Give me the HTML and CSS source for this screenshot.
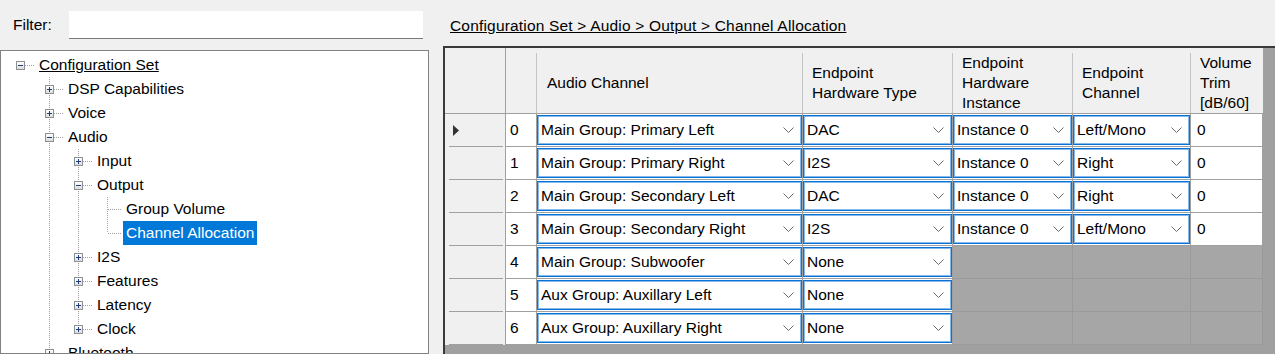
FILE: index.html
```html
<!DOCTYPE html>
<html lang="en">
<head>
<meta charset="utf-8">
<title>Channel Allocation</title>
<link rel="stylesheet" href="styles.css">
</head>
<body>
<div class="left">
  <div class="filter">
    <span class="filter-label">Filter:</span>
    <div class="filter-input"></div>
  </div>
  <div class="tree">
    <div class="row"><span class="node root"><i class="box"></i></span><span class="lbl u">Configuration Set</span></div>
    <div class="row"><span class="g"></span><span class="node mid"><i class="box plus"></i></span><span class="lbl">DSP Capabilities</span></div>
    <div class="row"><span class="g"></span><span class="node mid"><i class="box plus"></i></span><span class="lbl">Voice</span></div>
    <div class="row"><span class="g"></span><span class="node mid"><i class="box"></i></span><span class="lbl">Audio</span></div>
    <div class="row"><span class="g"></span><span class="g v"></span><span class="node mid"><i class="box plus"></i></span><span class="lbl">Input</span></div>
    <div class="row"><span class="g"></span><span class="g v"></span><span class="node mid"><i class="box"></i></span><span class="lbl">Output</span></div>
    <div class="row"><span class="g"></span><span class="g v"></span><span class="g v"></span><span class="node mid"></span><span class="lbl">Group Volume</span></div>
    <div class="row"><span class="g"></span><span class="g v"></span><span class="g v"></span><span class="node last"></span><span class="lbl sel">Channel Allocation</span></div>
    <div class="row"><span class="g"></span><span class="g v"></span><span class="node mid"><i class="box plus"></i></span><span class="lbl">I2S</span></div>
    <div class="row"><span class="g"></span><span class="g v"></span><span class="node mid"><i class="box plus"></i></span><span class="lbl">Features</span></div>
    <div class="row"><span class="g"></span><span class="g v"></span><span class="node mid"><i class="box plus"></i></span><span class="lbl">Latency</span></div>
    <div class="row"><span class="g"></span><span class="g v"></span><span class="node last"><i class="box plus"></i></span><span class="lbl">Clock</span></div>
    <div class="row"><span class="g"></span><span class="node mid"><i class="box plus"></i></span><span class="lbl">Bluetooth</span></div>
  </div>
</div>

<div class="right">
  <div class="crumb"><span>Configuration Set &gt; Audio &gt; Output &gt; Channel Allocation</span></div>
  <div class="dgv">
    <div class="tbl">
      <div class="hc corner"></div>
      <div class="hc"></div>
      <div class="hc pad10">Audio Channel</div>
      <div class="hc">Endpoint<br>Hardware Type</div>
      <div class="hc">Endpoint<br>Hardware<br>Instance</div>
      <div class="hc">Endpoint<br>Channel</div>
      <div class="hc noline">Volume<br>Trim<br>[dB/60]</div>

      <!-- row 0 -->
      <div class="rh"><svg class="arrow" width="6" height="11" viewBox="0 0 6 11"><polygon points="0,0 6,5.5 0,11" fill="#333"/></svg></div>
      <div class="c idx">0</div>
      <div class="c"><div class="cb"><span>Main Group: Primary Left</span><svg width="11" height="6" viewBox="0 0 11 6"><path d="M.5 .5 5.5 5.5 10.5 .5" fill="none" stroke="#6a6a6a"/></svg></div></div>
      <div class="c"><div class="cb"><span>DAC</span><svg width="11" height="6" viewBox="0 0 11 6"><path d="M.5 .5 5.5 5.5 10.5 .5" fill="none" stroke="#6a6a6a"/></svg></div></div>
      <div class="c"><div class="cb"><span>Instance 0</span><svg width="11" height="6" viewBox="0 0 11 6"><path d="M.5 .5 5.5 5.5 10.5 .5" fill="none" stroke="#6a6a6a"/></svg></div></div>
      <div class="c"><div class="cb"><span>Left/Mono</span><svg width="11" height="6" viewBox="0 0 11 6"><path d="M.5 .5 5.5 5.5 10.5 .5" fill="none" stroke="#6a6a6a"/></svg></div></div>
      <div class="c vol">0</div>

      <!-- row 1 -->
      <div class="rh"></div>
      <div class="c idx">1</div>
      <div class="c"><div class="cb"><span>Main Group: Primary Right</span><svg width="11" height="6" viewBox="0 0 11 6"><path d="M.5 .5 5.5 5.5 10.5 .5" fill="none" stroke="#6a6a6a"/></svg></div></div>
      <div class="c"><div class="cb"><span>I2S</span><svg width="11" height="6" viewBox="0 0 11 6"><path d="M.5 .5 5.5 5.5 10.5 .5" fill="none" stroke="#6a6a6a"/></svg></div></div>
      <div class="c"><div class="cb"><span>Instance 0</span><svg width="11" height="6" viewBox="0 0 11 6"><path d="M.5 .5 5.5 5.5 10.5 .5" fill="none" stroke="#6a6a6a"/></svg></div></div>
      <div class="c"><div class="cb"><span>Right</span><svg width="11" height="6" viewBox="0 0 11 6"><path d="M.5 .5 5.5 5.5 10.5 .5" fill="none" stroke="#6a6a6a"/></svg></div></div>
      <div class="c vol">0</div>

      <!-- row 2 -->
      <div class="rh"></div>
      <div class="c idx">2</div>
      <div class="c"><div class="cb"><span>Main Group: Secondary Left</span><svg width="11" height="6" viewBox="0 0 11 6"><path d="M.5 .5 5.5 5.5 10.5 .5" fill="none" stroke="#6a6a6a"/></svg></div></div>
      <div class="c"><div class="cb"><span>DAC</span><svg width="11" height="6" viewBox="0 0 11 6"><path d="M.5 .5 5.5 5.5 10.5 .5" fill="none" stroke="#6a6a6a"/></svg></div></div>
      <div class="c"><div class="cb"><span>Instance 0</span><svg width="11" height="6" viewBox="0 0 11 6"><path d="M.5 .5 5.5 5.5 10.5 .5" fill="none" stroke="#6a6a6a"/></svg></div></div>
      <div class="c"><div class="cb"><span>Right</span><svg width="11" height="6" viewBox="0 0 11 6"><path d="M.5 .5 5.5 5.5 10.5 .5" fill="none" stroke="#6a6a6a"/></svg></div></div>
      <div class="c vol">0</div>

      <!-- row 3 -->
      <div class="rh"></div>
      <div class="c idx">3</div>
      <div class="c"><div class="cb"><span>Main Group: Secondary Right</span><svg width="11" height="6" viewBox="0 0 11 6"><path d="M.5 .5 5.5 5.5 10.5 .5" fill="none" stroke="#6a6a6a"/></svg></div></div>
      <div class="c"><div class="cb"><span>I2S</span><svg width="11" height="6" viewBox="0 0 11 6"><path d="M.5 .5 5.5 5.5 10.5 .5" fill="none" stroke="#6a6a6a"/></svg></div></div>
      <div class="c"><div class="cb"><span>Instance 0</span><svg width="11" height="6" viewBox="0 0 11 6"><path d="M.5 .5 5.5 5.5 10.5 .5" fill="none" stroke="#6a6a6a"/></svg></div></div>
      <div class="c"><div class="cb"><span>Left/Mono</span><svg width="11" height="6" viewBox="0 0 11 6"><path d="M.5 .5 5.5 5.5 10.5 .5" fill="none" stroke="#6a6a6a"/></svg></div></div>
      <div class="c vol">0</div>

      <!-- row 4 -->
      <div class="rh"></div>
      <div class="c idx">4</div>
      <div class="c"><div class="cb"><span>Main Group: Subwoofer</span><svg width="11" height="6" viewBox="0 0 11 6"><path d="M.5 .5 5.5 5.5 10.5 .5" fill="none" stroke="#6a6a6a"/></svg></div></div>
      <div class="c"><div class="cb"><span>None</span><svg width="11" height="6" viewBox="0 0 11 6"><path d="M.5 .5 5.5 5.5 10.5 .5" fill="none" stroke="#6a6a6a"/></svg></div></div>
      <div class="c empty"></div>
      <div class="c empty"></div>
      <div class="c empty"></div>

      <!-- row 5 -->
      <div class="rh"></div>
      <div class="c idx">5</div>
      <div class="c"><div class="cb"><span>Aux Group: Auxillary Left</span><svg width="11" height="6" viewBox="0 0 11 6"><path d="M.5 .5 5.5 5.5 10.5 .5" fill="none" stroke="#6a6a6a"/></svg></div></div>
      <div class="c"><div class="cb"><span>None</span><svg width="11" height="6" viewBox="0 0 11 6"><path d="M.5 .5 5.5 5.5 10.5 .5" fill="none" stroke="#6a6a6a"/></svg></div></div>
      <div class="c empty"></div>
      <div class="c empty"></div>
      <div class="c empty"></div>

      <!-- row 6 -->
      <div class="rh"></div>
      <div class="c idx">6</div>
      <div class="c"><div class="cb"><span>Aux Group: Auxillary Right</span><svg width="11" height="6" viewBox="0 0 11 6"><path d="M.5 .5 5.5 5.5 10.5 .5" fill="none" stroke="#6a6a6a"/></svg></div></div>
      <div class="c"><div class="cb"><span>None</span><svg width="11" height="6" viewBox="0 0 11 6"><path d="M.5 .5 5.5 5.5 10.5 .5" fill="none" stroke="#6a6a6a"/></svg></div></div>
      <div class="c empty"></div>
      <div class="c empty"></div>
      <div class="c empty"></div>
    </div>
  </div>
</div>
</body>
</html>
```

FILE: styles.css
```css
* { box-sizing: border-box; }

html, body { margin: 0; padding: 0; }

body {
  width: 1275px;
  height: 354px;
  overflow: hidden;
  background: #f0f0f0;
  font-family: "Liberation Sans", Arial, sans-serif;
  font-size: 15.5px;
  color: #000;
  display: flex;
}

/* ---------- left pane ---------- */
.left {
  width: 429px;
  flex: none;
  display: flex;
  flex-direction: column;
}

.filter {
  height: 50px;
  flex: none;
  display: flex;
  align-items: flex-start;
  padding: 11px 0 0 13px;
}

.filter-label {
  width: 56px;
  line-height: 28px;
}

.filter-input {
  width: 354px;
  height: 28px;
  background: #fff;
  border-bottom: 1px solid #7a7a7a;
}

.tree {
  flex: 1;
  min-height: 0;
  background: #fff;
  border: 1px solid #828282;
  padding: 2px 0 0 5px;
  overflow: hidden;
}

.row {
  display: flex;
  height: 24px;
  flex: none;
}

.g, .node {
  width: 29px;
  flex: none;
}

.g.v {
  background: repeating-linear-gradient(to bottom, #a0a0a0 0 1px, transparent 1px 2px) 14px 0 / 1px 100% no-repeat;
}

.node {
  display: flex;
  align-items: center;
  justify-content: center;
}

.node.root {
  background: repeating-linear-gradient(to right, #a0a0a0 0 1px, transparent 1px 2px) 15px 12px / 14px 1px no-repeat;
}

.node.mid {
  background:
    repeating-linear-gradient(to right, #a0a0a0 0 1px, transparent 1px 2px) 15px 12px / 14px 1px no-repeat,
    repeating-linear-gradient(to bottom, #a0a0a0 0 1px, transparent 1px 2px) 14px 0 / 1px 100% no-repeat;
}

.node.last {
  background:
    repeating-linear-gradient(to right, #a0a0a0 0 1px, transparent 1px 2px) 15px 12px / 14px 1px no-repeat,
    repeating-linear-gradient(to bottom, #a0a0a0 0 1px, transparent 1px 2px) 14px 0 / 1px 12px no-repeat;
}

.box {
  display: block;
  width: 9px;
  height: 9px;
  border: 1px solid #8e8f8f;
  background:
    linear-gradient(#1f3d78, #1f3d78) center / 5px 1px no-repeat,
    linear-gradient(#ffffff, #dcdcdc);
}

.box.plus {
  background:
    linear-gradient(#1f3d78, #1f3d78) center / 5px 1px no-repeat,
    linear-gradient(#1f3d78, #1f3d78) center / 1px 5px no-repeat,
    linear-gradient(#ffffff, #dcdcdc);
}

.lbl {
  margin-left: 1px;
  padding: 0 3px;
  line-height: 24px;
  white-space: nowrap;
}

.lbl.u { text-decoration: underline; }

.lbl.sel {
  background: #0078d7;
  color: #fff;
}

/* ---------- right pane ---------- */
.right {
  flex: 1;
  min-width: 0;
  margin-left: 14px;
  display: flex;
  flex-direction: column;
}

.crumb {
  height: 46px;
  flex: none;
  padding: 17px 0 0 7px;
  line-height: 18px;
  letter-spacing: 0.18px;
  white-space: nowrap;
}

.crumb span { text-decoration: underline; }

.dgv {
  flex: 1;
  min-height: 0;
  background: #a0a0a0;
  border-top: 2px solid #3a3a3a;
  border-left: 2px solid #3a3a3a;
  overflow: hidden;
}

.tbl {
  display: grid;
  width: 818px;
  grid-template-columns: 61px 31px 266px 150px 120px 118px 72px;
  grid-template-rows: 66px;
  grid-auto-rows: 33px;
}

.hc {
  display: flex;
  align-items: center;
  padding: 5px 0 0 9px;
  line-height: 20px;
  border-bottom: 1px solid #a0a0a0;
  background:
    linear-gradient(#c4c4c4, #c4c4c4) right bottom / 1px calc(100% - 5px) no-repeat,
    #f0f0f0;
}

.hc.pad10 { padding-left: 10px; }

.hc.corner {
  background: #f0f0f0;
  border-right: 1px solid #a0a0a0;
}

.hc.noline { background: #f0f0f0; }

.rh {
  display: flex;
  align-items: center;
  padding-left: 8px;
  border-right: 1px solid #a0a0a0;
  background:
    linear-gradient(#a0a0a0, #a0a0a0) 4px 100% / 54px 1px no-repeat,
    #f0f0f0;
}

.c {
  background: #fff;
  border-right: 1px solid #a0a0a0;
  border-bottom: 1px solid #a0a0a0;
}

.c.idx {
  display: flex;
  align-items: center;
  padding-left: 4px;
}

.c.vol {
  display: flex;
  align-items: center;
  padding-left: 6px;
}

.c.empty {
  background: #a6a6a6;
  border-color: #9a9a9a;
}

.cb {
  margin: 1px 0;
  height: 30px;
  display: flex;
  align-items: center;
  justify-content: space-between;
  padding: 0 7px 0 3px;
  background: #fff;
  border: 1px solid #0a72d4;
  box-shadow: inset 0 0 0 1px #86b9ec;
  white-space: nowrap;
}

.cb svg { flex: none; }
```
